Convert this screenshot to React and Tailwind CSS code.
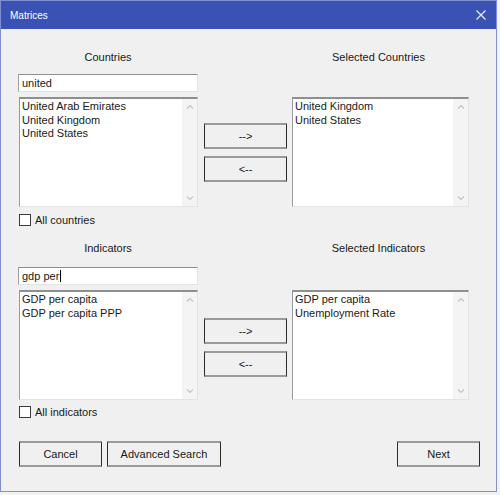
const font = { fontFamily: '"Liberation Sans", Arial, sans-serif' };

function Btn({ children, className = "" }) {
  return (
    <button
      className={
        "h-[26px] border border-t-2 border-b-2 border-x-[#2b2b2b] border-y-[#9a9a9a] bg-[#f0f0f0] text-[11px] text-[#1a1a1a] " +
        className
      }
    >
      {children}
    </button>
  );
}

function ListBox({ items, width }) {
  return (
    <div
      className={
        "flex h-[110px] border border-t-2 border-t-[#8f8f8f] border-l-[#9a9a9a] border-r-[#e3e3e3] border-b-[#e3e3e3] bg-white " +
        width
      }
    >
      <div className="flex-1 px-[2px] pt-px text-[11px] leading-[13.5px] text-[#1a1a1a]">
        {items.map((it) => (
          <div key={it}>{it}</div>
        ))}
      </div>
      <div className="flex w-[15px] flex-col items-center justify-between bg-[#f4f4f4] py-[5px] text-[#c4c4c4]">
        <svg width="8" height="5" viewBox="0 0 8 5">
          <path d="M1 4.5 4 1.5 7 4.5" fill="none" stroke="currentColor" strokeWidth="1.2" />
        </svg>
        <svg width="8" height="5" viewBox="0 0 8 5">
          <path d="M1 0.5 4 3.5 7 0.5" fill="none" stroke="currentColor" strokeWidth="1.2" />
        </svg>
      </div>
    </div>
  );
}

function SearchBox({ value, caret }) {
  return (
    <div className="flex h-[18px] w-[180px] items-center border border-t-[#8f8f8f] border-l-[#a0a0a0] border-r-[#e3e3e3] border-b-[#e3e3e3] bg-white px-[3px] text-[11px] text-[#1a1a1a]">
      {value}
      {caret && <span className="ml-px h-[12px] w-px bg-black" />}
    </div>
  );
}

function Check({ label }) {
  return (
    <div className="flex h-[14px] items-center gap-[4px] pl-[18px] text-[11px] text-[#1a1a1a]">
      <span className="h-[12px] w-[12px] border border-[#3a3a3a] bg-white" />
      {label}
    </div>
  );
}

function Section({ left, right, search, caret, items, selected, arrowTop, mtSearch }) {
  return (
    <div className="grid grid-cols-[180px_83px_177px] gap-x-[6px] pl-[17px]">
      <div className="text-center text-[11px] leading-[14px] text-[#1a1a1a]">{left}</div>
      <div />
      <div className="pr-[6px] text-center text-[11px] leading-[14px] text-[#1a1a1a]">{right}</div>
      <div className={"col-span-3 " + mtSearch}>
        <SearchBox value={search} caret={caret} />
      </div>
      <div className="mt-[5px] pl-px">
        <ListBox items={items} width="w-[179px]" />
      </div>
      <div className={"mt-[5px] flex flex-col gap-[7px] " + arrowTop}>
        <Btn className="w-[83px]">--&gt;</Btn>
        <Btn className="w-[83px]">&lt;--</Btn>
      </div>
      <div className="mt-[5px] -ml-px">
        <ListBox items={selected} width="w-[177px]" />
      </div>
    </div>
  );
}

export default function App() {
  return (
    <div className="h-[495px] w-[500px] overflow-hidden bg-[#f3f3f3]" style={font}>
      <div className="flex h-[492px] w-[497px] flex-col border border-[#7f8fd0] bg-[#f0f0f0]">
        <div className="flex h-[28px] items-center justify-between bg-[#3a52b4] pl-[9px] pr-[10px] text-[10px] text-white">
          <span>Matrices</span>
          <svg width="10" height="10" viewBox="0 0 10 10">
            <path d="M0.5 0.5 9.5 9.5M9.5 0.5 0.5 9.5" stroke="#e8ecf8" strokeWidth="1.2" />
          </svg>
        </div>
        <div className="flex flex-1 flex-col pt-[21px]">
          <Section
            left="Countries"
            right="Selected Countries"
            search="united"
            items={["United Arab Emirates", "United Kingdom", "United States"]}
            selected={["United Kingdom", "United States"]}
            arrowTop="pt-[26px]"
            mtSearch="mt-[10px]"
          />
          <div className="mt-[6px]">
            <Check label="All countries" />
          </div>
          <div className="mt-[14px]">
            <Section
              left="Indicators"
              right="Selected Indicators"
              search="gdp per"
              caret
              items={["GDP per capita", "GDP per capita PPP"]}
              selected={["GDP per capita", "Unemployment Rate"]}
              arrowTop="pt-[28px]"
              mtSearch="mt-[12px]"
            />
          </div>
          <div className="mt-[5px]">
            <Check label="All indicators" />
          </div>
          <div className="mt-[22px] flex items-center pl-[18px] pr-[16px]">
            <Btn className="w-[83px]">Cancel</Btn>
            <Btn className="ml-[5px] w-[114px]">Advanced Search</Btn>
            <Btn className="ml-auto w-[83px]">Next</Btn>
          </div>
        </div>
      </div>
    </div>
  );
}
